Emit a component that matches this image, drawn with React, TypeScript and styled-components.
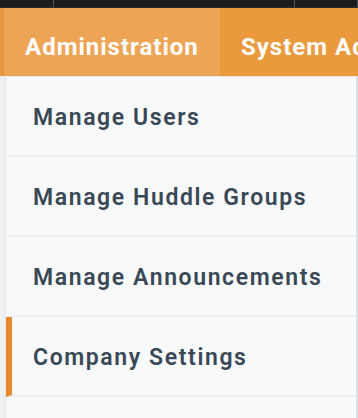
import React from "react";
import styled, { createGlobalStyle } from "styled-components";

const GlobalStyle = createGlobalStyle`
  html, body {
    margin: 0;
    padding: 0;
    background: #eef0f2;
    font-family: Roboto, "Liberation Sans", sans-serif;
    overflow: hidden;
  }
`;

const menuItems = [
  { label: "Manage Users", active: false },
  { label: "Manage Huddle Groups", active: false },
  { label: "Manage Announcements", active: false },
  { label: "Company Settings", active: true },
  { label: "", active: false },
];

export default function App() {
  return (
    <>
      <GlobalStyle />
      <Page>
        <TopStrip>
          <StripSegment width={53} />
          <StripSegment width={240} />
          <StripSegment />
        </TopStrip>
        <NavBar>
          <NavEdge />
          <NavTab active>Administration</NavTab>
          <NavTab>System Administration</NavTab>
        </NavBar>
        <Dropdown>
          {menuItems.map((item, i) => (
            <MenuItem key={i} active={item.active}>
              {item.label}
            </MenuItem>
          ))}
        </Dropdown>
      </Page>
    </>
  );
}

// ---------- Styled Components ----------

const Page = styled.div`
  width: 358px;
  height: 418px;
  overflow: hidden;
`;

const TopStrip = styled.div`
  display: flex;
  height: 7px;
  background: #1c1c1c;
  border-bottom: 1px solid #2c2c2c;
`;

const StripSegment = styled.div<{ width?: number }>`
  flex: ${({ width }) => (width ? `0 0 ${width}px` : "1")};
  border-right: 1px solid #4b5563;
`;

const NavBar = styled.div`
  display: flex;
  height: 68px;
  background: #ea993c;
  white-space: nowrap;
  overflow: hidden;
`;

const NavEdge = styled.div`
  flex: 0 0 4px;
  background: #e99640;
`;

const NavTab = styled.div<{ active?: boolean }>`
  flex: 0 0 auto;
  display: flex;
  align-items: center;
  padding: 10px 21px 0 21px;
  background: ${({ active }) => (active ? "#eea455" : "transparent")};
  color: #ffffff;
  font-size: 24px;
  font-weight: 700;
  letter-spacing: 1px;
  width: ${({ active }) => (active ? "216px" : "auto")};
  box-sizing: border-box;
`;

const Dropdown = styled.div`
  margin-left: 5px;
  border-top: 1px solid #e4e6e9;
  border-left: 1px solid #e4e6e9;
  border-right: 2px solid #dcdfe3;
  background: #f8f9fb;
`;

const MenuItem = styled.div<{ active?: boolean }>`
  display: flex;
  align-items: center;
  height: 78px;
  box-sizing: border-box;
  height: 80px;
  padding-top: 3px;
  padding-left: 21px;
  border-left: 6px solid ${({ active }) => (active ? "#e8892c" : "transparent")};
  border-bottom: 2px solid #eceef1;
  color: #3a4856;
  font-size: 23px;
  font-weight: 600;
  letter-spacing: 1.6px;
  white-space: nowrap;
`;
